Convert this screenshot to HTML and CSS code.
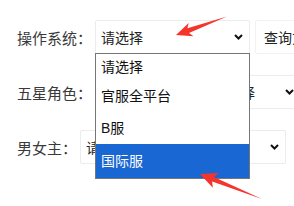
FILE: index.html
```html
<!DOCTYPE html>
<html lang="zh-CN">
<head>
    <meta charset="UTF-8">
    <meta name="viewport" content="width=device-width, initial-scale=1.0">
    <title>筛选</title>
    <link rel="stylesheet" href="styles.css">
</head>
<body>
    <div class="form">
        <div class="row">
            <div class="label">操作系统：</div>
            <div class="select short open">
                <span class="value">请选择</span>
                <svg class="chevron" width="9" height="6" viewBox="0 0 9 6"><path d="M1 1 L4.5 4.5 L8 1" fill="none" stroke="#111" stroke-width="2"/></svg>
                <div class="menu">
                    <div class="option first">请选择</div>
                    <div class="option">官服全平台</div>
                    <div class="option">B服</div>
                    <div class="option selected">国际服</div>
                </div>
            </div>
            <div class="btn">查询方式</div>
        </div>
        <div class="row">
            <div class="label">五星角色：</div>
            <div class="select">
                <span class="value">所有角色都可以自由选择</span>
                <svg class="chevron" width="9" height="6" viewBox="0 0 9 6"><path d="M1 1 L4.5 4.5 L8 1" fill="none" stroke="#111" stroke-width="2"/></svg>
            </div>
        </div>
        <div class="row">
            <div class="label">男女主：</div>
            <div class="select">
                <span class="value">请选择</span>
                <svg class="chevron" width="9" height="6" viewBox="0 0 9 6"><path d="M1 1 L4.5 4.5 L8 1" fill="none" stroke="#111" stroke-width="2"/></svg>
            </div>
        </div>
    </div>

    <svg class="marks" width="294" height="206" viewBox="0 0 294 206">
        <polygon points="176,35 188.7,23 187.4,28.2 227,16.5 189,33 193.5,36.2" fill="#f5342c"/>
        <polygon points="200,174 218.8,173 213.9,176.9 262,199 212.1,181.5 212.8,187.8" fill="#f5342c"/>
    </svg>
</body>
</html>
```

FILE: styles.css
```css
body {
    margin: 0;
    width: 294px;
    height: 206px;
    overflow: hidden;
    position: relative;
    background-color: #fff;
    font-family: "Liberation Sans", "Noto Sans CJK SC", sans-serif;
    font-size: 14px;
    color: #222;
}

.form {
    padding: 20px 0 0 17px;
}

.row {
    display: flex;
    align-items: center;
    margin-bottom: 21px;
    white-space: nowrap;
}

.label {
    color: #3a3a3a;
    font-size: 15px;
    margin-right: 3px;
    flex-shrink: 0;
}

.select {
    position: relative;
    flex-shrink: 0;
    box-sizing: border-box;
    width: 206px;
    height: 34px;
    border: 1px solid #ececec;
    border-radius: 2px;
    display: flex;
    align-items: center;
    padding-left: 5px;
    background-color: #fff;
}

.select.short {
    width: 155px;
}

.value {
    flex: 1;
    overflow: hidden;
}

.chevron {
    margin: 0 6px 0 4px;
    flex-shrink: 0;
}

.btn {
    flex-shrink: 0;
    box-sizing: border-box;
    height: 34px;
    margin-left: 5px;
    padding: 0 8px;
    border: 1px solid #f2f2f2;
    border-radius: 2px;
    display: flex;
    align-items: center;
}

.menu {
    position: absolute;
    top: 32px;
    left: -1px;
    z-index: 5;
    box-sizing: border-box;
    width: 155px;
    border: 1px solid #767676;
    background-color: #fff;
}

.option {
    height: 32px;
    line-height: 32px;
    padding-left: 5px;
    color: #111;
}

.option.first {
    height: 26px;
    line-height: 26px;
}

.option.selected {
    height: 34px;
    line-height: 34px;
    background-color: #1967d2;
    color: #fff;
}

.marks {
    position: absolute;
    top: 0;
    left: 0;
    z-index: 10;
}
```
